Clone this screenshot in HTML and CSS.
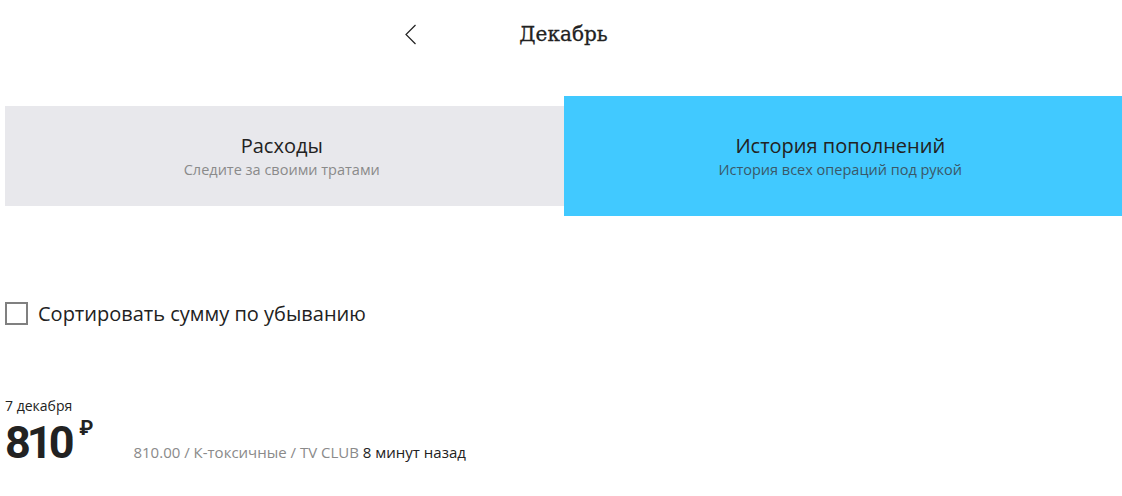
FILE: index.html
```html
<!DOCTYPE html>
<html lang="ru">
<head>
<meta charset="utf-8">
<title>Декабрь</title>
<link rel="stylesheet" href="styles.css">
</head>
<body>
<div class="page">
  <header class="header">
    <div class="header-side header-left">
      <button class="back" aria-label="Назад">
        <svg width="13" height="21" viewBox="0 0 13 21"><path d="M11.5 1 L2 10.5 L11.5 20" fill="none" stroke="#222" stroke-width="1.2"/></svg>
      </button>
    </div>
    <h1 class="title">Декабрь</h1>
    <div class="header-side"></div>
  </header>

  <div class="tabs">
    <div class="tab">
      <div class="tab-title">Расходы</div>
      <div class="tab-sub">Следите за своими тратами</div>
    </div>
    <div class="tab tab-active">
      <div class="tab-title">История пополнений</div>
      <div class="tab-sub">История всех операций под рукой</div>
    </div>
  </div>

  <label class="sort">
    <span class="box"></span>
    <span class="sort-text">Сортировать сумму по убыванию</span>
  </label>

  <div class="entry">
    <div class="entry-date">7 декабря</div>
    <div class="entry-row">
      <div class="amount">810<span class="rub">₽</span></div>
      <div class="entry-info"><span class="muted">810.00 / К-токсичные / TV CLUB</span> 8 минут назад</div>
    </div>
  </div>
</div>
</body>
</html>
```

FILE: styles.css
```css
* { box-sizing: border-box; }
html, body { margin: 0; padding: 0; background: #fff; }
body {
  font-family: "Open Sans", "Noto Sans", sans-serif;
  color: #222;
}
.page { padding-left: 5px; }

.header {
  display: grid;
  grid-template-columns: 1fr auto 1fr;
  align-items: center;
  height: 68px;
}
.header-left { display: flex; justify-content: flex-end; padding-right: 102px; }
.back {
  border: 0; background: none; padding: 0; margin: 0;
  display: flex; cursor: pointer;
}
.title {
  margin: 0;
  font-family: "DejaVu Serif", "Liberation Serif", serif;
  font-size: 20px;
  font-weight: normal;
  color: #222;
  -webkit-text-stroke: 0.3px #222;
}

.tabs {
  display: grid;
  grid-template-columns: 1fr 1fr;
  align-items: center;
  margin-top: 28px;
  height: 120px;
}
.tab {
  height: 100px;
  background: #e8e8ec;
  display: flex;
  flex-direction: column;
  align-items: center;
  justify-content: center;
  text-align: center;
  padding-right: 5px;
}
.tab-active {
  height: 120px;
  background: #41c9ff;
}
.tab-title { font-size: 20px; line-height: 26px; color: #222; }
.tab-sub { font-size: 14.5px; line-height: 20px; color: #8a8a8a; margin-top: 1px; }
.tab-active .tab-sub { color: #3a5868; }

.sort {
  display: flex;
  align-items: center;
  gap: 10px;
  margin-top: 85px;
  height: 24px;
  cursor: pointer;
}
.box {
  width: 23px; height: 23px;
  border: 2px solid #808080;
  background: #fff;
  flex: none;
}
.sort-text { font-size: 20px; color: #222; }

.entry { margin-top: 71px; }
.entry-date { font-size: 14px; line-height: 20px; color: #222; }
.entry-row {
  display: flex;
  align-items: flex-end;
  margin-top: 4px;
}
.amount {
  font-family: "Roboto", "Open Sans", sans-serif;
  font-weight: 700;
  font-size: 45px;
  line-height: 46px;
  letter-spacing: -4px;
  color: #222;
  position: relative;
  padding-right: 23px;
}
.rub {
  position: absolute;
  top: -3px;
  right: 0;
  font-size: 20px;
  line-height: 22px;
  letter-spacing: 0;
}
.entry-info {
  margin-left: 40px;
  font-size: 15px;
  line-height: 18px;
  color: #222;
  padding-bottom: 5px;
}
.muted { color: #8a8a8a; }
```
